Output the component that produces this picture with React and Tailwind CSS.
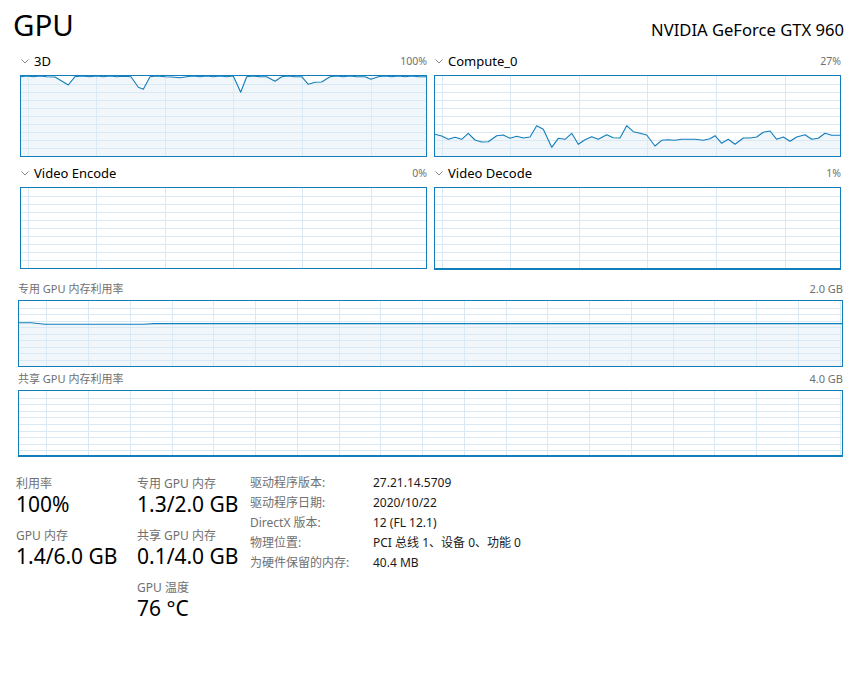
import React from "react";

const BLUE = "#117dbb";
const GRID = "#d9eaf4";
const FILL = "#f1f6fa";

const pts3D = [
  [63,230],[80,228],[100,230],[120,228],[140,230],[165,231],[205,255],[225,230],[245,228],[270,230],[290,228],[310,230],[330,228],[350,230],[370,229],[393,230],[415,262],[430,268],[450,230],[470,228],[495,230],[515,231],[540,233],[560,230],[580,228],[600,230],[620,228],[640,230],[660,228],[680,230],[700,228],[722,277],[740,230],[760,228],[780,230],[800,230],[825,244],[845,230],[865,228],[885,230],[905,230],[925,253],[945,247],[965,246],[990,230],[1010,228],[1030,230],[1050,228],[1070,230],[1095,230],[1113,238],[1135,230],[1155,228],[1175,230],[1195,228],[1215,230],[1235,228],[1255,230],[1278,230]
].map(([x, y]) => [x / 3 - 21, y / 3 - 76]);

const ptsCompute = [
  [45,403],[65,408],[85,418],[105,412],[125,418],[145,400],[165,420],[185,426],[205,425],[230,407],[250,405],[270,415],[290,409],[310,414],[330,411],[350,377],[370,388],[395,442],[415,415],[435,418],[455,400],[475,433],[495,419],[515,410],[535,418],[560,404],[580,413],[600,414],[620,377],[640,395],[660,400],[680,405],[705,438],[725,421],[745,419],[765,421],[785,418],[805,418],[825,418],[850,421],[870,416],[885,407],[905,430],[925,418],[945,433],[970,414],[990,414],[1010,411],[1030,397],[1050,393],[1070,418],[1090,411],[1110,424],[1130,411],[1155,404],[1175,418],[1195,415],[1215,400],[1235,406],[1260,406]
].map(([x, y]) => [x / 3 - 15, y / 3 - 76]);

const ptsMem = [[0, 21.8], [12, 21.8], [26, 23.2], [125, 23.2], [135, 22.6], [823, 22.6]];

function Grid({ w, h, vStart, vStep, hStep, hCount }) {
  const v = [];
  for (let x = vStart; x < w; x += vStep) v.push(Math.round(x) + 0.5);
  const hs = [];
  for (let i = 1; i <= hCount; i++) hs.push(Math.round(i * hStep) + 0.5);
  return (
    <g stroke={GRID} strokeWidth="1">
      {v.map((x) => (
        <line key={"v" + x} x1={x} y1={0} x2={x} y2={h} />
      ))}
      {hs.map((y) => (
        <line key={"h" + y} x1={0} y1={y} x2={w} y2={y} />
      ))}
    </g>
  );
}

function Chart({ w, h, pts, vStart, vStep, hStep, hCount, thickBottom, className = "" }) {
  const line = pts ? pts.map(([x, y]) => `${x.toFixed(1)},${y.toFixed(1)}`).join(" ") : null;
  const area = pts
    ? `0,${h} ` + line + ` ${w},${pts[pts.length - 1][1].toFixed(1)} ${w},${h}`
    : null;
  return (
    <div
      className={
        "border border-[#117dbb] bg-white " +
        (thickBottom ? "border-b-2 " : "") +
        className
      }
    >
      <svg width={w} height={h} className="block">
        {pts && <polygon points={area} fill={FILL} />}
        <Grid w={w} h={h} vStart={vStart} vStep={vStep} hStep={hStep} hCount={hCount} />
        {pts && <polyline points={line} fill="none" stroke={BLUE} strokeWidth="1.1" strokeLinejoin="round" />}
      </svg>
    </div>
  );
}

function Chevron() {
  return (
    <svg width="8" height="5" className="block mr-[5px] ml-[1px]">
      <polyline points="0.5,0.5 4,4 7.5,0.5" fill="none" stroke="#8a8a8a" strokeWidth="1" />
    </svg>
  );
}

function ChartHeader({ title, value }) {
  return (
    <div className="flex h-[20px] items-center justify-between leading-[20px]">
      <div className="flex items-center">
        <Chevron />
        <span className="text-[13px] text-black">{title}</span>
      </div>
      <span className="text-[10.5px] text-[#707070]">{value}</span>
    </div>
  );
}

function SmallChart(props) {
  return (
    <Chart w={405} h={80} vStart={6.7} vStep={68.6} hStep={8} hCount={9} {...props} />
  );
}

function Stat({ label, value, className = "" }) {
  return (
    <div className={className}>
      <div className="h-[13px] text-[12px] leading-[13px] text-[#707070]">{label}</div>
      <div className="text-[21px] leading-[29px] text-black">{value}</div>
    </div>
  );
}

const details = [
  ["驱动程序版本:", "27.21.14.5709"],
  ["驱动程序日期:", "2020/10/22"],
  ["DirectX 版本:", "12 (FL 12.1)"],
  ["物理位置:", "PCI 总线 1、设备 0、功能 0"],
  ["为硬件保留的内存:", "40.4 MB"],
];

export default function App() {
  return (
    <div className="w-[863px] h-[676px] bg-white overflow-hidden font-['Noto_Sans','Noto_Sans_CJK_SC',sans-serif]">
      <div className="flex items-baseline justify-between pl-[13px] pr-[19px] pt-[10px]">
        <div className="text-[29.5px] leading-[30px] text-black">GPU</div>
        <div className="text-[16.6px] leading-[20px] text-black">NVIDIA GeForce GTX 960</div>
      </div>

      <div className="ml-[20px] mt-[11px] grid w-[821px] grid-cols-[407px_407px] gap-x-[7px]">
        <div>
          <ChartHeader title="3D" value="100%" />
          <SmallChart pts={pts3D} className="mt-[4px]" />
        </div>
        <div>
          <ChartHeader title="Compute_0" value="27%" />
          <SmallChart pts={ptsCompute} className="mt-[4px]" />
        </div>
        <div className="mt-[6px]">
          <ChartHeader title="Video Encode" value="0%" />
          <SmallChart className="mt-[4px]" />
        </div>
        <div className="mt-[6px]">
          <ChartHeader title="Video Decode" value="1%" />
          <Chart w={405} h={80} vStart={6.7} vStep={68.6} hStep={8} hCount={9} thickBottom className="mt-[4px] h-[83px]" />
        </div>
      </div>

      <div className="ml-[18px] mt-[11px] w-[825px]">
        <div className="flex h-[16px] items-center justify-between text-[11px] leading-[16px] text-[#707070]">
          <span>专用 GPU 内存利用率</span>
          <span>2.0 GB</span>
        </div>
        <Chart w={823} h={65} pts={ptsMem} vStart={27.3} vStep={41.75} hStep={6.5} hCount={9} className="mt-[3px]" />
        <div className="mt-[4px] flex h-[16px] items-center justify-between text-[11px] leading-[16px] text-[#707070]">
          <span>共享 GPU 内存利用率</span>
          <span>4.0 GB</span>
        </div>
        <Chart w={823} h={64} vStart={27.3} vStep={41.75} hStep={6.6} hCount={9} thickBottom className="mt-[3px]" />
      </div>

      <div className="mt-[16px] flex items-start pl-[16px]">
        <div className="w-[121px] pt-[4px]">
          <Stat label="利用率" value="100%" />
          <Stat label="GPU 内存" value="1.4/6.0 GB" className="mt-[10px]" />
        </div>
        <div className="w-[113px] pt-[4px]">
          <Stat label="专用 GPU 内存" value="1.3/2.0 GB" />
          <Stat label="共享 GPU 内存" value="0.1/4.0 GB" className="mt-[10px]" />
          <Stat label="GPU 温度" value="76 °C" className="mt-[10px]" />
        </div>
        <div className="grid grid-cols-[123px_auto] content-start text-[12px] leading-[20px]">
          {details.map(([k, v]) => (
            <React.Fragment key={k}>
              <div className="text-[#707070]">{k}</div>
              <div className="text-[#1a1a1a]">{v}</div>
            </React.Fragment>
          ))}
        </div>
      </div>
    </div>
  );
}
